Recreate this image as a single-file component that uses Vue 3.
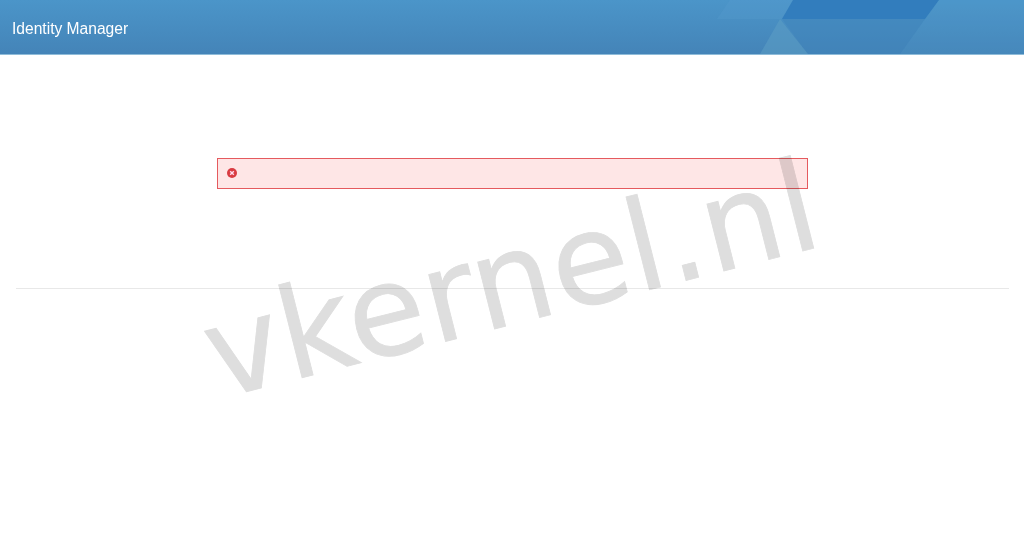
<script setup>
const title = 'Identity Manager'
</script>

<template>
  <div class="page">
    <header class="header">
      <svg class="art" viewBox="0 0 344 54" preserveAspectRatio="none" aria-hidden="true">
        <polygon points="37,19 50,0 113,0 102,19" fill="#5a9fcf" opacity=".28" />
        <polygon points="113,0 259,0 245,19 102,19" fill="#327dbd" />
        <polygon points="102,19 245,19 220,54 128,54" fill="#3f82bb" opacity=".45" />
        <polygon points="100,19 80,54 128,54" fill="#5c9fc4" opacity=".55" />
        <polygon points="245,19 259,0 344,0 344,54 220,54" fill="#5a9fcf" opacity=".15" />
      </svg>
      <span class="title">{{ title }}</span>
    </header>
    <main class="main">
      <div class="alert">
        <svg class="alert-icon" viewBox="0 0 10 10" aria-hidden="true">
          <circle cx="5" cy="5" r="5" fill="#d93c42" />
          <path d="M3.2 3.2 6.8 6.8M6.8 3.2 3.2 6.8" stroke="#fde" stroke-width="1.4" fill="none" />
        </svg>
      </div>
      <hr class="divider" />
    </main>
    <div class="watermark">vkernel.nl</div>
  </div>
</template>

<style scoped>
.page {
  position: relative;
  height: 551px;
  overflow: hidden;
  background: #fff;
  font-family: "Liberation Sans", Arial, sans-serif;
}
.header {
  position: relative;
  height: 54px;
  display: flex;
  align-items: center;
  padding-left: 12px;
  background: linear-gradient(#4b95c9, #4484b8);
  box-shadow: 0 1px 0 #8fbcd9;
  overflow: hidden;
}
.art {
  position: absolute;
  top: 0;
  right: 0;
  width: 344px;
  height: 54px;
}
.title {
  position: relative;
  top: 2px;
  color: #fff;
  font-size: 15.6px;
  line-height: 20px;
}
.main {
  padding: 104px 15px 0 16px;
}
.alert {
  box-sizing: border-box;
  width: 591px;
  height: 31px;
  margin-left: 201px;
  padding: 9px 0 0 9px;
  background: #fee6e6;
  border: 1px solid #e55a5e;
}
.alert-icon {
  display: block;
  width: 10px;
  height: 10px;
}
.divider {
  margin: 99px 0 0;
  border: 0;
  border-top: 1px solid #e8e8e8;
}
.watermark {
  position: absolute;
  left: 218px;
  top: 293px;
  font-family: "DejaVu Sans", sans-serif;
  font-size: 126px;
  letter-spacing: 1px;
  line-height: 1;
  white-space: nowrap;
  color: #dedede;
  -webkit-text-stroke: 0.8px #dedede;
  mix-blend-mode: multiply;
  transform-origin: 0 107px;
  transform: rotate(-14.2deg);
  pointer-events: none;
}
</style>
